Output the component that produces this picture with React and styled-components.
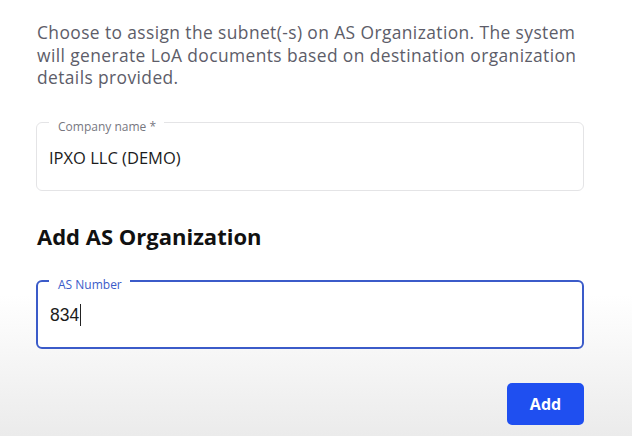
import React from 'react';
import styled, { createGlobalStyle } from 'styled-components';

const Global = createGlobalStyle`
    html, body {
        margin: 0;
        padding: 0;
    }
    body {
        width: 632px;
        height: 436px;
        overflow: hidden;
        background: linear-gradient(to bottom, #ffffff 0px, #ffffff 295px, #ebebeb 436px);
        font-family: "Open Sans", "Noto Sans", sans-serif;
    }
`;

const Wrapper = styled.div`
    width: 548px;
    padding: 21px 0 0 36px;
    display: flex;
    flex-direction: column;
`;

const Intro = styled.p`
    margin: 0 0 0 1px;
    font-size: 17.4px;
    line-height: 22.5px;
    color: #5d5d69;
    letter-spacing: 0.4px;
`;

const Field = styled.fieldset`
    margin: ${p => p.top}px 0 0 0;
    height: ${p => p.active ? 78 : 78}px;
    box-sizing: border-box;
    padding: 0 12px;
    border: ${p => p.active ? '2px solid #3b5bc9' : '1px solid #e4e4e6'};
    border-radius: 6px;
    background: #fff;
    display: flex;
    align-items: flex-start;
`;

const Legend = styled.legend`
    margin-left: ${p => p.active ? -1 : 0}px;
    padding: 8px 8px 0 9px;
    font-size: 12px;
    line-height: 12px;
    color: ${p => p.active ? '#3b5bc9' : '#77777f'};
`;

const Value = styled.div`
    margin-top: ${p => p.active ? 13 : 15}px;
    font-family: ${p => p.active ? '"Liberation Sans", Arial, sans-serif' : '"Open Sans", sans-serif'};
    font-size: ${p => p.active ? 17.5 : 16.5}px;
    line-height: 20px;
    color: #1c1c1c;
    display: flex;
    align-items: center;
`;

const Caret = styled.span`
    display: inline-block;
    width: 1px;
    height: 22px;
    margin-left: 1px;
    background: #222;
`;

const Heading = styled.h2`
    margin: 32px 0 0 1px;
    font-size: 22px;
    font-weight: 700;
    line-height: 26px;
    color: #111;
`;

const Footer = styled.div`
    display: flex;
    justify-content: flex-end;
    margin-top: 34px;
`;

const Button = styled.button`
    width: 77px;
    height: 42px;
    border: none;
    border-radius: 5px;
    background: #1f4ff0;
    color: #fff;
    font-family: "Open Sans", sans-serif;
    font-size: 16px;
    font-weight: 700;
    cursor: pointer;
`;

export default function App() {
    return (
        <>
            <Global />
            <Wrapper>
                <Intro>
                    Choose to assign the subnet(-s) on AS Organization. The system
                    will generate LoA documents based on destination organization
                    details provided.
                </Intro>
                <Field top={24}>
                    <Legend>Company name *</Legend>
                    <Value>IPXO LLC (DEMO)</Value>
                </Field>
                <Heading>Add AS Organization</Heading>
                <Field top={22} active>
                    <Legend active>AS Number</Legend>
                    <Value active>834<Caret /></Value>
                </Field>
                <Footer>
                    <Button>Add</Button>
                </Footer>
            </Wrapper>
        </>
    );
}
